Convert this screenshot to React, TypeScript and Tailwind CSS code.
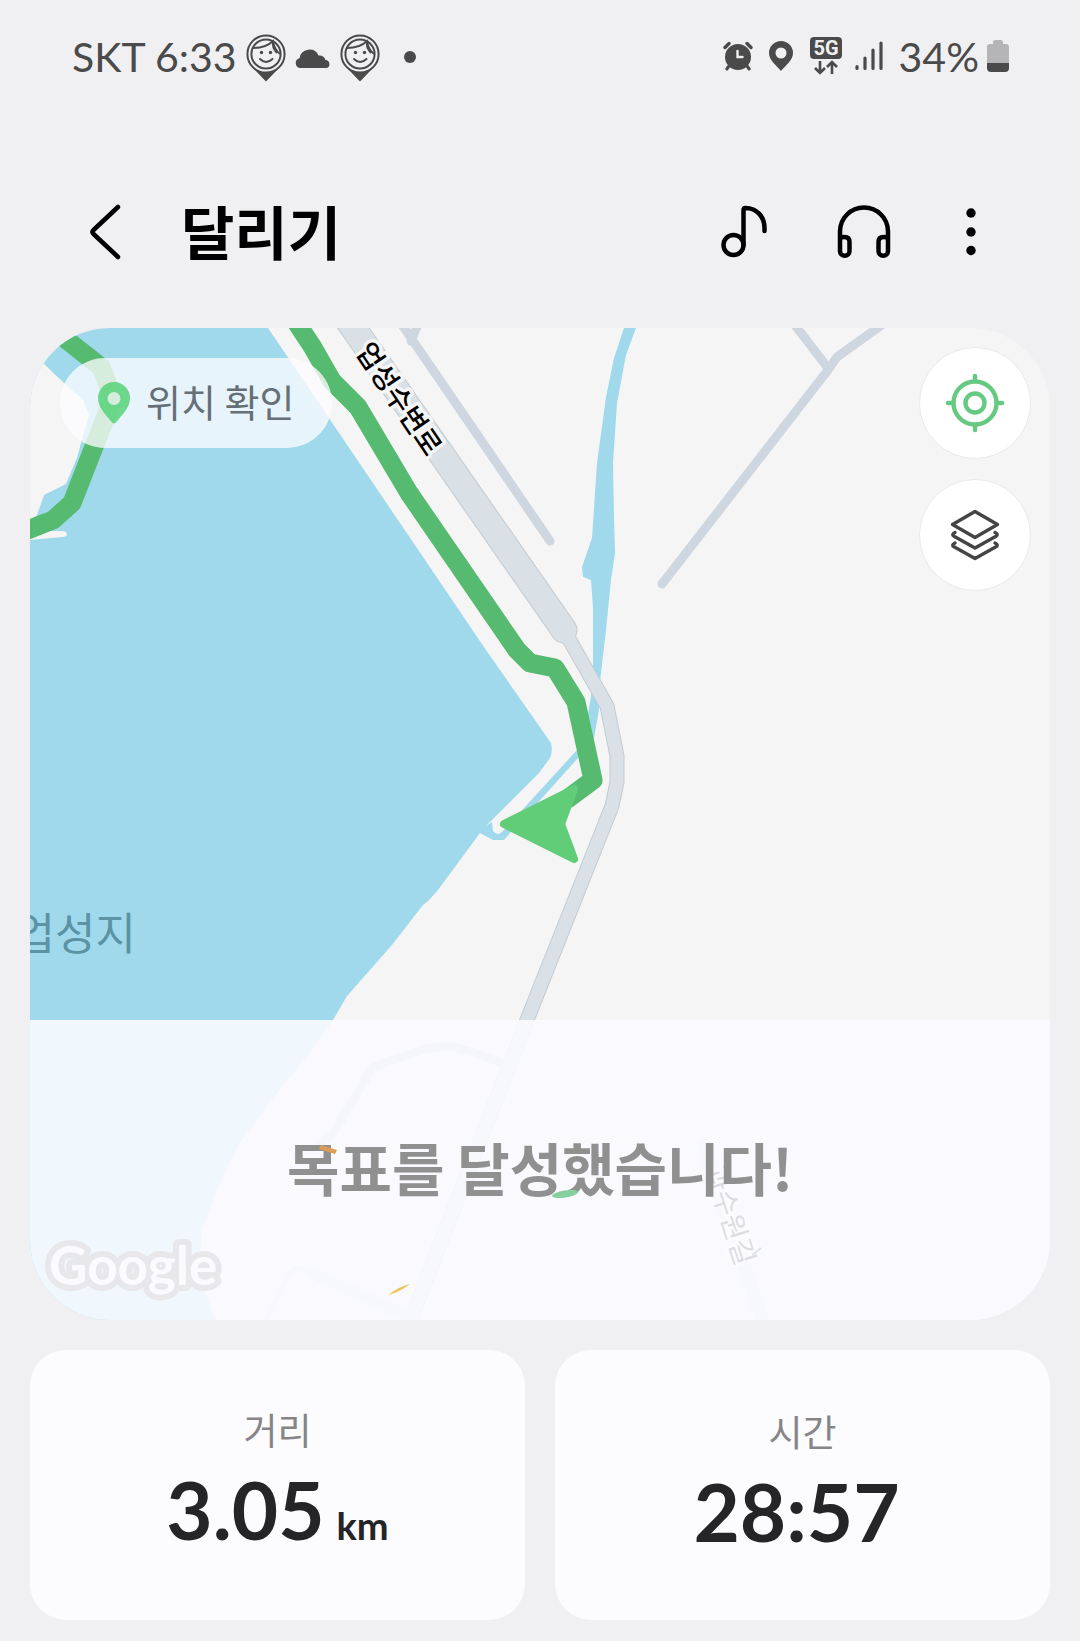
import React from 'react';

const stats = [
  { label: '거리', value: '3.05', unit: 'km' },
  { label: '시간', value: '28:57', unit: '' },
];

function AvatarPin() {
  return (
    <svg width="40" height="48" viewBox="0 0 40 48" fill="none" stroke="#4a4a4a">
      <path d="M6 33 L20 47.500 L34 33 Q20 44 6 33Z" fill="#4a4a4a" stroke="none" />
      <circle cx="20" cy="20" r="18.600" strokeWidth="2" />
      <circle cx="20" cy="20" r="14.600" strokeWidth="2" />
      <path d="M7 14 C14 14 22 12 27 7 C28 13 30 17 34 20" strokeWidth="1.800" />
      <path d="M27 7 C26 12 27 15 31 19" strokeWidth="1.800" />
      <path d="M14 25 Q20 31 26.500 25" strokeWidth="2" strokeLinecap="round" />
      <circle cx="15.500" cy="18.500" r="1.700" fill="#4a4a4a" stroke="none" />
      <circle cx="24.500" cy="18.500" r="1.700" fill="#4a4a4a" stroke="none" />
    </svg>
  );
}

function StatusBar() {
  return (
    <div className="flex h-28 items-center justify-between pl-[72px] pr-[71px] text-[41px] leading-none text-[#4a4a4a] font-['Lato',sans-serif]">
      <div className="flex items-center">
        <span>SKT 6:33</span>
        <div className="ml-2.5 mt-1 flex items-center gap-[9px]">
          <AvatarPin />
          <svg width="36" height="20" viewBox="0 0 36 20" fill="#4a4a4a">
            <path d="M5 20 A5 5 0 0 1 4.500 10.200 A10 10 0 0 1 23.500 7.500 A6.500 6.500 0 0 1 30.500 12 A4.200 4.200 0 0 1 32 20Z" />
          </svg>
          <AvatarPin />
        </div>
        <span className="ml-6 mt-0.5 size-3 rounded-full bg-[#4a4a4a]" />
      </div>
      <div className="flex items-center">
        {/* Alarm */}
        <svg width="30" height="30" viewBox="0 0 30 30" fill="none" stroke="#4a4a4a" strokeLinecap="round">
          <circle cx="15" cy="16" r="13" fill="#4a4a4a" stroke="none" />
          <path d="M2 6.500 L6 2.500 M28 6.500 L24 2.500" strokeWidth="3.400" />
          <path d="M6 25 L3.800 28 M24 25 L26.200 28" strokeWidth="3" />
          <path d="M14.500 10 V16 H19.500" stroke="#f0f0f3" strokeWidth="2.400" />
        </svg>
        {/* Location */}
        <svg className="ml-4" width="24" height="30" viewBox="0 0 24 30">
          <path fillRule="evenodd" fill="#4a4a4a" d="M12 0 A12 12 0 0 1 24 12 C24 19 17 24 12 30 C7 24 0 19 0 12 A12 12 0 0 1 12 0Z M12 6.500 A5.500 5.500 0 1 0 12 17.500 A5.500 5.500 0 1 0 12 6.500Z" />
        </svg>
        {/* 5G */}
        <svg className="ml-4" width="34" height="38" viewBox="0 0 34 38" fill="none">
          <rect x="1" y="0" width="32" height="22" rx="4" fill="#4a4a4a" />
          <text x="17" y="18" textAnchor="middle" fontSize="20" fontWeight="700" fill="#f0f0f3" fontFamily="Roboto, sans-serif">5G</text>
          <path d="M11 24 V36 M6 31 L11 36 L16 31 M23 37 V25 M18 30 L23 25 L28 30" stroke="#4a4a4a" strokeWidth="2.600" />
        </svg>
        {/* Signal */}
        <svg className="ml-3" width="28" height="30" viewBox="0 0 28 30" stroke="#4a4a4a" strokeWidth="3.200" strokeLinecap="round">
          <path d="M2 25.500 V27.500 M10 17 V27.500 M18 9 V27.500 M26 2 V27.500" />
        </svg>
        <span className="ml-4">34%</span>
        {/* Battery */}
        <svg className="ml-2" width="22" height="32" viewBox="0 0 22 32">
          <path d="M6 4 V2 Q6 0 8 0 H14 Q16 0 16 2 V4 H19 Q22 4 22 7 V23 H0 V7 Q0 4 3 4Z" fill="#b5b5b7" />
          <path d="M0 23 H22 V28 Q22 32 18 32 H4 Q0 32 0 28Z" fill="#4a4a4a" />
        </svg>
      </div>
    </div>
  );
}

function Header() {
  return (
    <header className="mt-6 flex h-48 items-center justify-between pl-[77px] pr-[93px]">
      <div className="flex items-center gap-12">
        <button type="button" aria-label="뒤로">
          <svg width="56" height="56" viewBox="0 0 56 56" fill="none" stroke="#000" strokeWidth="4.500" strokeLinecap="round" strokeLinejoin="round">
            <path d="M41 3 L16.500 26 Q14.500 28 16.500 30 L41 53" />
          </svg>
        </button>
        <h1 className="pb-1 text-[58px] font-bold leading-none text-black">달리기</h1>
      </div>
      <div className="flex items-center gap-16">
        <button type="button" aria-label="음악">
          <svg width="56" height="56" viewBox="0 0 56 56" fill="none" stroke="#000" strokeWidth="4.500" strokeLinecap="round">
            <circle cx="18.500" cy="41" r="10" />
            <path d="M28.500 41 V6 Q28.500 4 30.500 4 C42 4 49.500 13 49.500 24 V27" />
          </svg>
        </button>
        <button type="button" aria-label="헤드폰">
          <svg width="56" height="56" viewBox="0 0 56 56" fill="none" stroke="#000" strokeWidth="4.500">
            <path d="M5 47 V27.500 A24 24 0 0 1 53 27.500 V47" />
            <path d="M5 34 Q7 33 9.500 33 Q14.500 33 14.500 38 V47 A4.750 4.750 0 0 1 5 47 M53 34 Q51 33 48.500 33 Q43.500 33 43.500 38 V47 A4.750 4.750 0 0 0 53 47" />
          </svg>
        </button>
        <button type="button" aria-label="더보기">
          <svg width="32" height="56" viewBox="0 0 32 56" fill="#000">
            <circle cx="16" cy="9" r="4.700" />
            <circle cx="16" cy="28" r="4.700" />
            <circle cx="16" cy="46.500" r="4.700" />
          </svg>
        </button>
      </div>
    </header>
  );
}

function RouteMap() {
  return (
    <svg className="block h-full w-full" viewBox="30 328 1020 992" preserveAspectRatio="xMidYMid slice" fill="none" fontFamily="'Noto Sans CJK KR', sans-serif">
      {/* Lake */}
      <path
        fill="#a0d9eb"
        d="M30 328 H268 L486 650 L551 743 Q553 751 550 758 L539 773 L486 826 L492 822 L493 831 Q498 837 503 831 L577 750 L588 713 L591 697 L593 665 V607 L591 580 L583 577 L582 567 L592 538 L597 463 L606 397 L614 358 L624 328 H636 L626 355 L617 403 L613 463 L614 517 L615 553 L611 580 L606 630 L600 682 L599 710 L594 738 L578 758 L543 797 L510 833 L504 840 H493 L480 833 L438 890 L429 900 L423 905 L392 945 L347 996 L333 1020 L312 1050 L281 1088 L240 1143 Q222 1175 216 1193 L202 1230 Q200 1240 201 1253 L205 1290 L215 1320 H30Z"
      />
      <path fill="#f5f5f5" d="M30 350 L43 363 L64 383 L83 400 L89 415 L81 443 L77 458 L66 484 L44 495 L37 515 L30 522Z" />
      <path fill="#f5f5f5" d="M30 531 H60 Q67 531 67 534 Q67 537 62 537 L30 540Z" />

      {/* Small roads */}
      <g stroke="#ced6df" strokeWidth="9" strokeLinecap="round" strokeLinejoin="round">
        <path d="M396 316 L550 541" />
        <path d="M411 341 L418 324" />
        <path d="M662 584 L828 370 L837 357 L890 319" />
        <path d="M788 316 L828 368" />
        <path d="M502 1063 L476 1053 L449 1046 L424 1049 L373 1067 L334 1132 L317 1147" />
      </g>
      <g stroke="#c3cbd2" strokeLinecap="round" strokeLinejoin="round">
        <path d="M345 316 L564 630" strokeWidth="27" />
        <path d="M565 632 L607 706 L617 756 V782 L612 806 L527 1020 L406 1332" strokeWidth="15" />
      </g>
      <g stroke="#d9e0e6" strokeLinecap="round" strokeLinejoin="round">
        <path d="M345 316 L564 630" strokeWidth="25" />
        <path d="M565 632 L607 706 L617 756 V782 L612 806 L527 1020 L406 1332" strokeWidth="13" />
        <path d="M405 1315 L312 1273" strokeWidth="12" />
        <path d="M309 1270 L297 1268 L289 1273 L265 1322" strokeWidth="5" />
        <path d="M704 1146 L764 1325" strokeWidth="14" />
      </g>

      {/* Route */}
      <g stroke="#56ba70" strokeWidth="19" strokeLinejoin="round">
        <path d="M40 318 L68 341 L101 367 L113 398 L72 503 L53 520 L20 533" />
        <path d="M290 312 L300 328 L312 346 L332 381 L358 407 L409 493 L517 650 L530 663 L555 668 L576 702 L593 780 L566 800" />
      </g>
      <path d="M504 824 L574 789 L561 824 L574 859Z" fill="#61cd78" stroke="#61cd78" strokeWidth="8" strokeLinejoin="round" />

      {/* Labels */}
      <text x="136" y="950" textAnchor="end" fontSize="44" fill="#5c93a4">업성지</text>
      <g transform="translate(399 399) rotate(56)">
        <text y="10" textAnchor="middle" fontSize="28" fontWeight="500" fill="#000" stroke="#f5f5f5" strokeWidth="7" strokeLinejoin="round" paintOrder="stroke">업성수변로</text>
      </g>
      <g transform="translate(730 1215) rotate(72)">
        <text y="10" textAnchor="middle" fontSize="28" fill="#000" stroke="#fff" strokeWidth="6" strokeLinejoin="round" paintOrder="stroke">과수원길</text>
      </g>
      <text x="49" y="1285" fontSize="53" fontWeight="700" fontFamily="Lato, sans-serif" fill="#fff" stroke="#60605a" strokeWidth="12" strokeLinejoin="round" paintOrder="stroke">Google</text>
    </svg>
  );
}

function MapCard() {
  return (
    <section className="relative aspect-[1020/992] overflow-hidden rounded-[80px] bg-[#f5f5f5]">
      <RouteMap />

      <button type="button" className="absolute left-[30px] top-[30px] flex h-[90px] items-center gap-4 rounded-full bg-[#fdfdff]/77 pl-[38px] pr-[38px] text-[38px] leading-none text-[#666e76]">
        <svg width="32" height="42" viewBox="0 0 32 42">
          <path fillRule="evenodd" fill="#4fd070" fillOpacity="0.800" d="M16 0 A16 16 0 0 1 32 16 C32 26 23 34 18 40.500 Q16 42.500 14 40.500 C9 34 0 26 0 16 A16 16 0 0 1 16 0Z M16 10 A6.500 6.500 0 1 0 16 23 A6.500 6.500 0 1 0 16 10Z" />
        </svg>
        <span className="pb-1">위치 확인</span>
      </button>

      <div className="absolute right-[19px] top-[19px] flex flex-col gap-5">
        <button type="button" aria-label="현재 위치" className="flex size-28 items-center justify-center rounded-full border border-[#e9e9ea] bg-white">
          <svg width="60" height="60" viewBox="0 0 60 60" fill="none" stroke="#66c981" strokeWidth="4.400" strokeLinecap="round">
            <circle cx="30" cy="30" r="21.500" />
            <circle cx="30" cy="30" r="9.500" />
            <path d="M30 8 V3 M30 52 V57 M8 30 H3 M52 30 H57" />
          </svg>
        </button>
        <button type="button" aria-label="지도 유형" className="flex size-28 items-center justify-center rounded-full border border-[#e9e9ea] bg-white">
          <svg width="56" height="56" viewBox="0 0 56 56" fill="none" stroke="#444" strokeWidth="3.400" strokeLinecap="round" strokeLinejoin="round">
            <path d="M28 4.500 L50.500 17.500 L28 30.500 L5.500 17.500Z" />
            <path d="M8 25.500 Q4 27.500 7 29.300 L28 41 L49 29.300 Q52 27.500 48 25.500" />
            <path d="M8 36 Q4 38 7 39.800 L28 51.500 L49 39.800 Q52 38 48 36" />
          </svg>
        </button>
      </div>

      <div className="absolute inset-x-0 bottom-0 flex h-[300px] items-center justify-center bg-[#fbfbff]/88">
        <p className="pb-2 text-[57px] font-bold leading-none text-[#909090]">목표를 달성했습니다!</p>
        {/* Confetti */}
        <svg className="absolute inset-0 h-full w-full" viewBox="0 0 1020 300" preserveAspectRatio="xMidYMid slice">
          <path d="M291 125 L307 130 L305 134 L289 129Z" fill="#dd9d55" />
          <ellipse cx="535" cy="174" rx="13" ry="3.500" transform="rotate(-9 535 174)" fill="#84d09e" />
          <path d="M358 275 Q370 266 380 264 Q370 272 358 275Z" fill="#ecc45c" />
          <path d="M722 235 L731 228" stroke="#dfe0f2" strokeWidth="2" />
        </svg>
      </div>
    </section>
  );
}

export default function App() {
  return (
    <main className="min-h-screen bg-[#f0f0f3] pb-5 font-['Noto_Sans_CJK_KR',sans-serif]">
      <StatusBar />
      <Header />
      <div className="flex flex-col gap-[30px] px-[30px]">
        <MapCard />
        <div className="grid grid-cols-2 gap-[30px]">
          {stats.map((stat) => (
            <section key={stat.label} className="flex h-[270px] flex-col items-center justify-center gap-4 rounded-[36px] bg-[#fcfcfe] pb-3">
              <h2 className="text-[37px] leading-[48px] text-[#858587]">{stat.label}</h2>
              <p className="flex items-baseline gap-3 font-bold text-[#252527] font-['Lato',sans-serif]">
                <span className="text-[80px] leading-[80px]">{stat.value}</span>
                <span className="text-[38px]">{stat.unit}</span>
              </p>
            </section>
          ))}
        </div>
      </div>
    </main>
  );
}
